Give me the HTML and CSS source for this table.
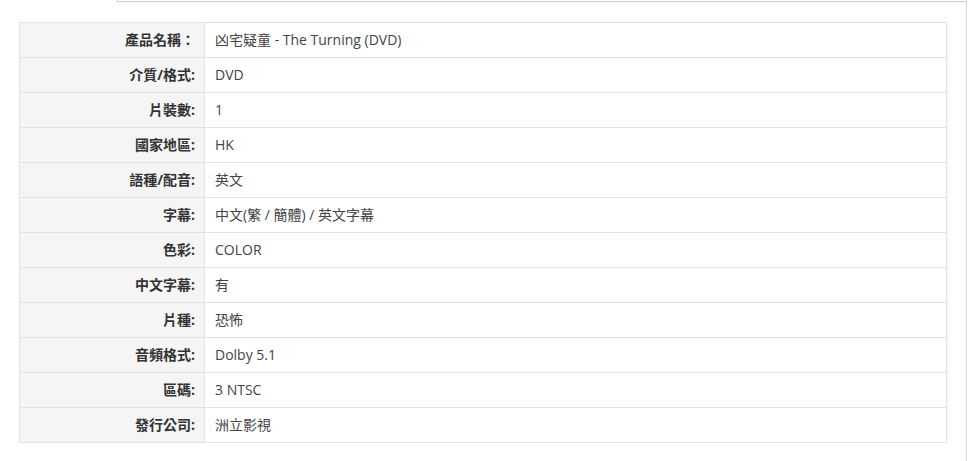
FILE: index.html
```html
<!DOCTYPE html>
<html lang="zh-Hant">
<head>
  <meta charset="UTF-8">
  <title>凶宅疑童 - The Turning (DVD)</title>
  <link rel="stylesheet" href="styles.css">
</head>
<body>
  <div class="page">
    <div class="top-box"></div>
    <table class="spec">
      <tr><th>產品名稱：</th><td>凶宅疑童 - The Turning (DVD)</td></tr>
      <tr><th>介質/格式:</th><td>DVD</td></tr>
      <tr><th>片裝數:</th><td>1</td></tr>
      <tr><th>國家地區:</th><td>HK</td></tr>
      <tr><th>語種/配音:</th><td>英文</td></tr>
      <tr><th>字幕:</th><td>中文(繁 / 簡體) / 英文字幕</td></tr>
      <tr><th>色彩:</th><td>COLOR</td></tr>
      <tr><th>中文字幕:</th><td>有</td></tr>
      <tr><th>片種:</th><td>恐怖</td></tr>
      <tr><th>音頻格式:</th><td>Dolby 5.1</td></tr>
      <tr><th>區碼:</th><td>3 NTSC</td></tr>
      <tr><th>發行公司:</th><td>洲立影視</td></tr>
    </table>
  </div>
</body>
</html>
```

FILE: styles.css
```css
body {
  margin: 0;
  background: #fff;
  font-family: 'Open Sans', 'Noto Sans CJK TC', sans-serif;
  font-size: 14px;
  color: #333;
}
.page {
  width: 966px;
  height: 461px;
  border-right: 1px solid #d5d5d5;
}
.top-box {
  margin-left: 117px;
  height: 1px;
  border-left: 1px solid #ccc;
  border-bottom: 1px solid #ccc;
}
.spec {
  margin: 20px 0 0 19px;
  width: 928px;
  border-collapse: collapse;
  box-shadow: 4px 0 3px -3px #f2f2f2;
}
.spec th,
.spec td {
  height: 34px;
  padding: 0;
  border: 1px solid #e3e3e3;
  line-height: 20px;
}
.spec th {
  width: 175px;
  padding-right: 9px;
  text-align: right;
  font-weight: 700;
  background-color: #f5f5f5;
  color: #333;
}
.spec td {
  padding-left: 10px;
  text-align: left;
  color: #444;
}
```
